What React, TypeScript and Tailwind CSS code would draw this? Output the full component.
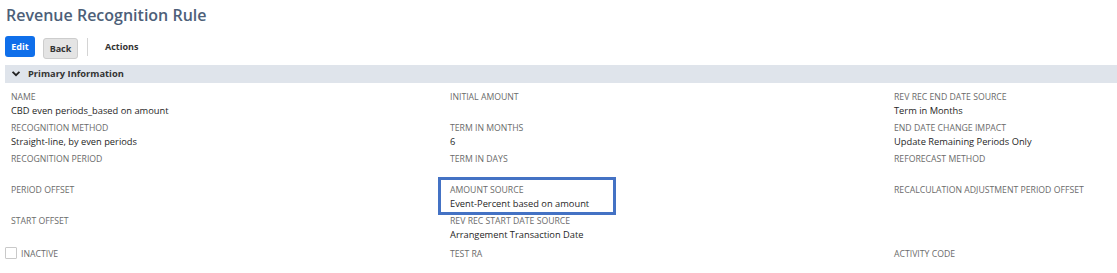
import { ReactNode } from 'react';

type Field = {
  label: string;
  value?: string;
  highlight?: boolean;
};

const columns: Field[][] = [
  [
    { label: 'Name', value: 'CBD even periods_based on amount' },
    { label: 'Recognition Method', value: 'Straight-line, by even periods' },
    { label: 'Recognition Period' },
    { label: 'Period Offset' },
    { label: 'Start Offset' },
  ],
  [
    { label: 'Initial Amount' },
    { label: 'Term in Months', value: '6' },
    { label: 'Term in Days' },
    { label: 'Amount Source', value: 'Event-Percent based on amount', highlight: true },
    { label: 'Rev Rec Start Date Source', value: 'Arrangement Transaction Date' },
  ],
  [
    { label: 'Rev Rec End Date Source', value: 'Term in Months' },
    { label: 'End Date Change Impact', value: 'Update Remaining Periods Only' },
    { label: 'Reforecast Method' },
    { label: 'Recalculation Adjustment Period Offset' },
    { label: '' },
  ],
];

const FieldBlock = ({ field }: { field: Field }) => (
  <div className="relative h-[31px]">
    {field.highlight && (
      <div className="absolute -left-[12px] -top-[7px] w-[178px] h-[38px] border-[3px] border-[#4472c4]" />
    )}
    <div className="text-[8.7px] leading-[12px] uppercase text-[#6b6b6b]">{field.label || '\u00a0'}</div>
    <div className="text-[9.3px] leading-[14px] text-[#262626] mt-[1px]">{field.value || '\u00a0'}</div>
  </div>
);

const Button = ({ children, primary }: { children: ReactNode; primary?: boolean }) => (
  <button
    className={
      primary
        ? 'h-[21px] w-[30px] rounded-[3px] bg-[#0f6fea] text-white text-[9px] font-bold'
        : 'h-[21px] w-[35px] rounded-[3px] bg-[#e4e4e4] border border-[#cdcdcd] text-[#333] text-[9px] font-bold'
    }
  >
    {children}
  </button>
);

export default function App() {
  return (
    <div className="w-[1117px] h-[273px] bg-white overflow-hidden font-['Open_Sans',sans-serif]">
      <h1 className="pl-[6px] pt-[3px] text-[16px] leading-[24px] font-semibold text-[#4d5f79]">
        Revenue Recognition Rule
      </h1>

      <div className="flex items-center pl-[5px] mt-[9px] h-[21px]">
        <Button primary>Edit</Button>
        <div className="ml-[8px]">
          <Button>Back</Button>
        </div>
        <div className="ml-[9px] w-px h-[18px] bg-[#d4d4d4]" />
        <span className="ml-[17px] text-[9px] font-bold text-[#333]">Actions</span>
      </div>

      <div className="ml-[5px] mt-[8px] h-[18px] bg-[#dfe4eb] flex items-center">
        <svg className="ml-[7px] w-[8px] h-[8px]" viewBox="0 0 10 10" fill="none">
          <path d="M1.5 3 L5 6.5 L8.5 3" stroke="#222" strokeWidth="2.2" strokeLinecap="square" />
        </svg>
        <span className="ml-[8px] text-[9.3px] font-bold text-[#333]">Primary Information</span>
      </div>

      <div className="pl-[11px] pt-[8px] grid grid-cols-[439px_444px_1fr]">
        {columns.map((col, i) => (
          <div key={i}>
            {col.map((f, j) => (
              <FieldBlock key={j} field={f} />
            ))}
          </div>
        ))}
      </div>

      <div className="pt-[2px] grid grid-cols-[445px_444px_1fr] pl-[5px] items-center">
        <div className="flex items-center">
          <span className="w-[12px] h-[12px] border border-[#c9c9c9] rounded-[1px] bg-white -mt-[4px]" />
          <span className="ml-[4px] text-[8.7px] uppercase text-[#6b6b6b]">Inactive</span>
        </div>
        <span className="text-[8.7px] uppercase text-[#6b6b6b]">Test RA</span>
        <span className="text-[8.7px] uppercase text-[#6b6b6b]">Activity Code</span>
      </div>
    </div>
  );
}
